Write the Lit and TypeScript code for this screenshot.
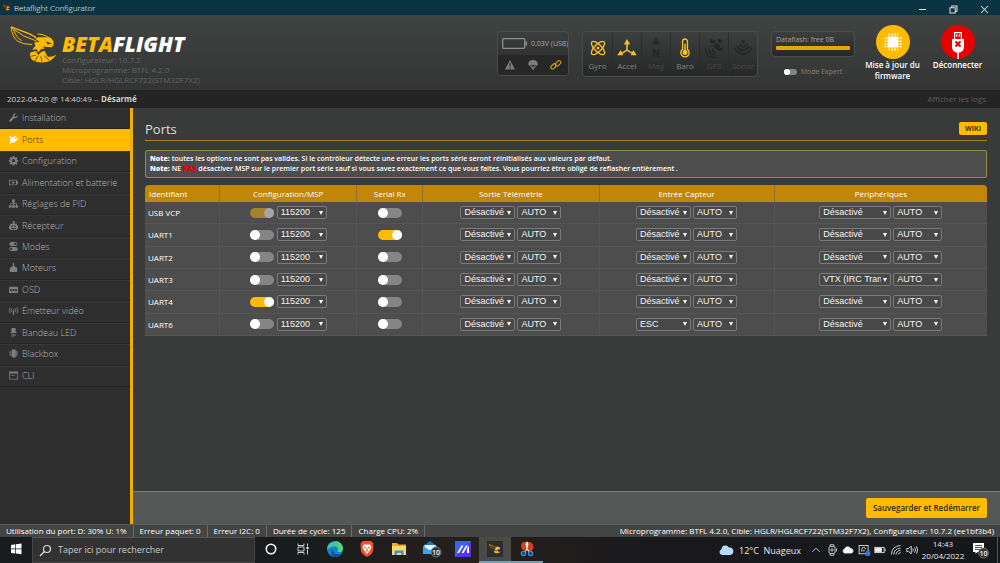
import { LitElement, html, css, svg } from "lit";
import { customElement, property, state } from "lit/decorators.js";
import { classMap } from "lit/directives/class-map.js";

const bee = svg`
  <path d="M2 3 L58 24 Q74 31 84 42" fill="none" stroke="currentColor" stroke-width="4"/>
  <path d="M2 3 Q6 34 22 46 Q38 56 66 56 M10 12 Q18 36 34 44 M4 6 L40 30 L80 46" fill="none" stroke="currentColor" stroke-width="3"/>
  <path d="M84 34 L104 34 L118 34 Q130 40 131 52 Q131 60 124 64 L98 62 L104 68 L92 70 L84 80 L80 70 L66 72 L76 60 L72 50 L88 48 L78 40 Z" fill="currentColor"/>
  <path d="M82 24 Q112 26 128 46" fill="none" stroke="currentColor" stroke-width="3"/>
  <path d="M60 80 L78 76 L84 88 L94 78 L104 76 L112 92 Q126 96 139 86 Q128 106 104 110 Q74 112 63 100 Q58 90 60 80 Z" fill="currentColor"/>
  <path d="M62 92 L78 88 M74 106 L84 90 M96 108 L92 92 M118 104 L102 90" stroke="#3a3d3c" stroke-width="2.500"/>
  <path d="M108 46 L126 54 L112 56 Z" fill="#3a3d3c"/>`;

const icons: Record<string, unknown> = {
  wrench: svg`<path d="M15.500 3.500 12.500 6.500 9.800 6.200 9.500 3.500 12.500.600A4.500 4.500 0 0 0 7 6.300L.800 12.500A1.900 1.900 0 0 0 3.500 15.200L9.700 9A4.500 4.500 0 0 0 15.500 3.500Z"/>`,
  plug: svg`<path d="M1 1 5 4.500 7 2.500 13.500 9 11 12Q8 15 4.500 13L1.800 15.800 0 14 2.500 11.500Q0 8 3 5.500L0 2.500Z"/><path d="m8 4.500 4-4 1.500 1.500-4 4Zm3.500 3.500 4-3.500 1 1.500-4 4Z"/>`,
  gear: svg`<path fill-rule="evenodd" d="M6.700 0h2.600l.4 2.200 1.500.7 1.900-1.300 1.800 1.800-1.300 1.900.7 1.500 2.200.4v2.600l-2.200.4-.7 1.500 1.300 1.900-1.800 1.800-1.900-1.300-1.500.7-.4 2.200H6.700l-.4-2.200-1.500-.7-1.900 1.300-1.800-1.800 1.300-1.900-.7-1.500L-.5 9.800V7.200l2.200-.4.700-1.500L1.100 3.400l1.800-1.800 1.900 1.300 1.500-.7ZM8 5.200a3 3 0 1 0 0 6 3 3 0 0 0 0-6Z"/>`,
  battery: svg`<path fill-rule="evenodd" d="M0 3h14v3h2v4h-2v3H0Zm1.500 1.500v7h11v-7Z"/><path d="M8 5 4 8.500h2.500V11L11 7.500H8Z"/>`,
  tree: svg`<path d="M5.500 1h5v5H9v1.500h5V11h2v4.500h-4.500V11h1V9H9v2h1.500v4.500h-5V11H7V9H3.500v2h1v4.500H0V11h2V7.500h5V6H5.500Z"/>`,
  robot: svg`<path fill-rule="evenodd" d="M7 0h3v5h4v3h2v6h-2v2H2v-2H0V8h2V5h5ZM4.500 8v2.500H7V8ZM9.500 8v2.500H12V8ZM4 12.500V14h8v-1.500Z"/>`,
  modes: svg`<path fill-rule="evenodd" d="M4 0h7a3.500 3.500 0 0 1 0 7H4a3.500 3.500 0 0 1 0-7Zm7 1.500a2 2 0 1 0 0 4 2 2 0 0 0 0-4ZM4 9h8a3.500 3.500 0 0 1 0 7H4a3.500 3.500 0 0 1 0-7Zm0 1.500a2 2 0 1 0 0 4 2 2 0 0 0 0-4Z"/>`,
  motor: svg`<path d="M7 0h2v5h1.500v2H13l1.500 3v6h-13v-6L3 7h2.500V5H7Z"/>`,
  osd: svg`<path fill-rule="evenodd" d="M1 3h14l1 2v9H0V5Zm1 4v4h3V7Zm4.500 0v4h3V7ZM11 7v4h3V7Z"/>`,
  antenna: svg`<path d="M7 6h2v10H7Z"/><path d="M5 4.500Q3 7.500 5 11M2 2.500Q-1 8 2 13M11 4.500Q13 7.500 11 11M14 2.500Q17 8 14 13" fill="none" stroke="currentColor" stroke-width="1.600"/>`,
  led: svg`<path d="M4.500 0h7l.5 7h1.500v2H2.500V7H4ZM4.500 10H6v6H4.500ZM10 10h1.500v4H10ZM7.300 10h1.400v5H7.300Z"/>`,
  blackbox: svg`<path d="M5 1h7v14H5ZM2.500 3H4v10H2.500ZM13 3h1.500v10H13ZM0 5h1.200v2H0Zm0 4h1.200v2H0Zm15.200-4H16v6h-.8Z"/>`,
  cli: svg`<path fill-rule="evenodd" d="M0 1h16v14H0Zm1.300 3.500v9.200h13.400V4.500Z"/><path d="M3 6.500h2v1.500H3ZM6 7h4v1.300H6Z"/>`,
};

const icon = (name: string) =>
  html`<svg class="icon" viewBox="0 0 16 16" fill="currentColor" aria-hidden="true">${icons[name]}</svg>`;

const sensorIcons: Record<string, unknown> = {
  Gyro: svg`<g fill="none" stroke="currentColor" stroke-width="2"><ellipse cx="12" cy="12" rx="12.500" ry="5" transform="rotate(45 12 12)"/><ellipse cx="12" cy="12" rx="12.500" ry="5" transform="rotate(-45 12 12)"/></g><circle cx="12" cy="12" r="2.200" fill="currentColor"/>`,
  Accel: svg`<path d="M12 5v10L3 20.500M12 15l9 5.500" fill="none" stroke="currentColor" stroke-width="2.200"/><path d="M12-1l4.500 8h-9ZM-2 22.500 3 15l3.500 7.500ZM26 22.500 21 15l-3.500 7.500Z" fill="currentColor"/>`,
  Mag: svg`<path d="M12-3l6 10H6Z" fill="currentColor"/><path d="M8.500 25V13M8.500 13l7 12M15.500 25V13" fill="none" stroke="currentColor" stroke-width="2.500"/>`,
  Baro: svg`<path d="M8.500 14V2.500a3.500 3.500 0 0 1 7 0V14a6 6 0 1 1-7 0Z" fill="none" stroke="currentColor" stroke-width="2"/><path d="M11 6h2v9a3.700 3.700 0 1 1-2 0Z" fill="currentColor"/>`,
  GPS: svg`<g fill="currentColor"><path d="m11 9 5-5 5 5-5 5ZM8-1l7 3-4 4-6-3ZM18 9l7 4-3 4-7-4ZM17 1l3-3 4 4-3 3Z"/></g><path d="M10 14a4 4 0 0 0 4 4M5 13a8 8 0 0 0 8 9M0 12q0 14 14 14" fill="none" stroke="currentColor" stroke-width="2"/>`,
  Sonar: svg`<g fill="none" stroke="currentColor" stroke-width="2.400"><path d="M-1 12Q12 30 25 12M3 9Q12 22 21 9M7 7Q12 14 17 7"/></g><circle cx="12" cy="3" r="2.500" fill="currentColor"/>`,
};

const trayIcons: Record<string, unknown> = {
  chevron: svg`<path d="M3 10.500 8 5.500l5 5"/>`,
  watch: svg`<rect x="4" y="3.500" width="8" height="9" rx="1.500"/><path d="M5.500 3V1h5v2M5.500 13v2h5v-2M14 6v4"/><circle cx="8" cy="8" r="1.500"/>`,
  onedrive: svg`<path d="M3 12a3 3 0 0 1 .5-5.500 4.500 4.500 0 0 1 8-.5A3.200 3.200 0 0 1 13 12Z" fill="#fff"/>`,
  sync: svg`<rect x="1.500" y="2" width="12" height="11"/><path d="M5 10V7a2.500 2.500 0 0 1 5 0M6 9h3"/><circle cx="13" cy="12.500" r="3.500" fill="#2f7bd8" stroke="none"/>`,
  power: svg`<rect x="1" y="4.500" width="12.500" height="7"/><path d="M2 5.500h8v5H2Z" fill="#fff"/><path d="M15 6.500v3"/>`,
  wifi: svg`<path d="M2 14Q2 3 14 2M5 14q0-7.500 9-8.500M8 14q0-4.500 6-5.500M11 14q0-2 3-2.500"/>`,
  volume: svg`<path d="M1 6h2.500L7 3v10L3.500 10H1ZM9 6q1.500 2 0 4M11.500 4.500q2.500 3.500 0 7M14 3q3 5 0 10"/>`,
};

interface PortRow {
  id: string;
  msp: boolean;
  locked?: boolean;
  rx: boolean;
  sensor: string;
  peripheral: string;
}

@customElement("bf-toggle")
class BfToggle extends LitElement {
  @property({ type: Boolean }) checked = false;
  @property({ type: Boolean }) disabled = false;
  @property() label = "";
  @property({ type: Boolean, reflect: true }) small = false;
  static styles = css`
    :host { display: inline-flex; --w: 24px; --h: 10px; }
    :host([small]) { --w: 13px; --h: 6px; }
    .switch { appearance: none; display: flex; align-items: center; margin: 0; width: var(--w); height: var(--h); border-radius: 6px; background: #858585; }
    .switch::before { content: ""; width: var(--h); height: var(--h); border-radius: 50%; background: #fff; }
    .switch:checked { background: #ffbb00; justify-content: flex-end; }
    .switch:disabled { background: #a5832b; }
    .switch:disabled::before { background: #a6a6a6; }
  `;
  render() {
    return html`<input class="switch" type="checkbox" role="switch" aria-label=${this.label} .checked=${this.checked} ?disabled=${this.disabled} />`;
  }
}

@customElement("bf-select")
class BfSelect extends LitElement {
  @property() value = "";
  @property() label = "";
  @property({ attribute: false }) options: string[] = [];
  static styles = css`
    :host { display: inline-grid; align-items: center; }
    .box, .arrow { grid-area: 1 / 1; }
    .box { appearance: none; box-sizing: border-box; width: 100%; height: 13px; margin: 0; padding: 0 9px 0 3px; border: 1px solid #7a7a7a; border-radius: 2px; background: #484848; color: #f4f4f4; font: 9px/11px "Liberation Sans", Arial, sans-serif; overflow: hidden; }
    .arrow { justify-self: end; width: 4px; height: 4px; margin-right: 4px; fill: #fff; pointer-events: none; z-index: 1; }
  `;
  render() {
    const all = this.options.includes(this.value) ? this.options : [this.value, ...this.options];
    return html`<select class="box" aria-label=${this.label}>
        ${all.map((o) => html`<option ?selected=${o === this.value}>${o}</option>`)}
      </select>
      <svg class="arrow" viewBox="0 0 4 4" aria-hidden="true"><path d="M0 0h4L2 4Z" /></svg>`;
  }
}

@customElement("app-root")
class AppRoot extends LitElement {
  @state() private active = "Ports";

  private tabs: [string, string][] = [
    ["Installation", "wrench"],
    ["Ports", "plug"],
    ["Configuration", "gear"],
    ["Alimentation et batterie", "battery"],
    ["Réglages de PID", "tree"],
    ["Récepteur", "robot"],
    ["Modes", "modes"],
    ["Moteurs", "motor"],
    ["OSD", "osd"],
    ["Émetteur vidéo", "antenna"],
    ["Bandeau LED", "led"],
    ["Blackbox", "blackbox"],
    ["CLI", "cli"],
  ];

  private sensors: [string, boolean][] = [
    ["Gyro", true], ["Accel", true], ["Mag", false], ["Baro", true], ["GPS", false], ["Sonar", false],
  ];

  private rows: PortRow[] = [
    { id: "USB VCP", msp: true, locked: true, rx: false, sensor: "Désactivé", peripheral: "Désactivé" },
    { id: "UART1", msp: false, rx: true, sensor: "Désactivé", peripheral: "Désactivé" },
    { id: "UART2", msp: false, rx: false, sensor: "Désactivé", peripheral: "Désactivé" },
    { id: "UART3", msp: false, rx: false, sensor: "Désactivé", peripheral: "VTX (IRC Tramp)" },
    { id: "UART4", msp: true, rx: false, sensor: "Désactivé", peripheral: "Désactivé" },
    { id: "UART6", msp: false, rx: false, sensor: "ESC", peripheral: "Désactivé" },
  ];

  static styles = css`
    :host { display: flex; flex-direction: column; height: 100vh; overflow: hidden; font: 8px/11px "Open Sans", "Noto Sans", sans-serif; color: #fff; background: #393b3a; }
    * { box-sizing: border-box; }
    button { font: inherit; color: inherit; border: 0; padding: 0; margin: 0; background: none; cursor: pointer; }
    a { color: inherit; text-decoration: none; }
    svg { display: block; overflow: visible; flex: none; }
    .stroke { fill: none; stroke: #ddd; stroke-width: 1.2; }

    .titlebar { display: flex; align-items: center; flex: none; height: 15px; background: #0c3341; color: #fff; }
    .app-name { font-weight: 300; }
    .app-icon { width: 9px; height: 9px; margin: 0 3px 0 2px; padding: 1px; background: #2b2b2b; color: #ffbb00; }
    .window-buttons { display: flex; margin-left: auto; padding-top: 3px; }
    .window-buttons button { width: 31px; display: grid; place-items: center; }
    .window-buttons svg { width: 7px; height: 7px; }

    .header { display: flex; align-items: flex-start; flex: none; height: 75px; padding: 10px 10px 0; background: linear-gradient(#404342, #323534); }
    .bee { width: 47px; height: 37px; color: #ffbb00; margin-top: 1px; }
    .brand { margin: 9px auto 0 5px; color: #626463; line-height: 10px; }
    .wordmark { margin: 0; font: italic 800 21px/21px "Open Sans", sans-serif; color: #ffbb00; }
    .wordmark span { color: #fff; }
    .panel { border: 1px solid #4a4c4b; border-radius: 4px; background: linear-gradient(#3d3f3e, #272727); margin-top: 6px; }
    .power { width: 72px; height: 45px; overflow: hidden; margin-right: 13px; font-size: 7px; color: #a5a5a5; }
    .volts { display: flex; align-items: center; gap: 4px; height: 23px; padding-left: 4px; white-space: nowrap; }
    .cell { width: 25px; height: 11px; }
    .flags { display: flex; justify-content: space-around; align-items: center; height: 20px; background: #272727; color: #7c7c7c; }
    .flags svg { width: 10px; height: 10px; }
    .flags .link { color: #c99a1c; }
    .sensors { display: grid; grid-template-columns: repeat(6, 29px); height: 46px; margin: 6px 13px 0 0; padding: 0; list-style: none; overflow: hidden; }
    .sensor { display: flex; flex-direction: column; align-items: center; gap: 3px; padding-top: 7px; border-left: 1px solid #2b2c2c; color: #484949; }
    .sensor:first-child { border-left: 0; }
    .sensor svg { width: 18px; height: 18px; color: #252626; }
    .sensor.on svg { color: #f7c02c; }
    .sensor.on { color: #858585; }
    .storage { width: 84px; margin-right: 5px; }
    .flash { height: 26px; padding: 2px 4px 0; font-size: 7px; color: #a6a6a6; }
    .flash label { display: block; }
    .flash meter { appearance: none; display: block; width: 100%; height: 4px; margin-top: 1px; border: 0; }
    .flash meter::-webkit-meter-bar { display: block; height: 4px; border: 0; border-radius: 1px; background: #e5a800; }
    .flash meter::-webkit-meter-optimum-value { background: #e5a800; }
    .expert { display: flex; align-items: center; justify-content: center; gap: 4px; margin-top: 9px; font-size: 7px; color: #828282; }
    .action { display: flex; flex-direction: column; align-items: center; width: 65px; line-height: 11px; font-weight: 600; }
    .disc { width: 34px; height: 34px; border-radius: 50%; background: #ffbb00; overflow: hidden; }
    .disc.red { background: #e60000; }

    .logbar { display: flex; justify-content: space-between; align-items: center; flex: none; height: 18px; padding: 0 14px 2px 7px; background: #242424; color: #d0d0d0; }
    .logbar a { color: #5d5d5d; }

    .middle { display: flex; flex: 1; min-height: 0; }
    .sidebar { flex: none; width: 133px; border-right: 3px solid #f0ae00; background: #2e2e2e; }
    .tabs { display: grid; grid-template-rows: repeat(13, 1fr); height: 279px; margin: 0; padding: 0; list-style: none; }
    .tab { display: flex; align-items: center; gap: 4px; height: 100%; padding: 0 0 2px 9px; border-top: 1px solid #383838; border-bottom: 1px solid #242424; color: #b4b4b4; font-size: 9px; font-weight: 300; white-space: nowrap; }
    .tab .icon { width: 9px; height: 9px; color: #7f7f7f; }
    .tab.active { background: #ffbb00; border-color: #ffbb00; color: #3a2c00; }
    .tab.active .icon { color: #fff; }

    .page { display: flex; flex-direction: column; flex: 1; min-width: 0; }
    .content { flex: 1; min-height: 0; padding: 11px 13px 0 12px; }
    .heading { display: flex; align-items: center; justify-content: space-between; height: 22px; padding-bottom: 2px; border-bottom: 1px solid #b0800c; }
    .heading h1 { margin: 0; font-size: 13px; line-height: 18px; font-weight: 400; color: #dedede; }
    .wiki { padding: 0 6px; border-radius: 2px; background: #ffbb00; color: #4a3600; font-size: 7px; line-height: 13px; font-weight: 700; }
    .note { margin: 9px 0 7px; padding: 3px 4px; border: 1px solid #9a8a4a; border-radius: 2px; background: #4d4d4d; font-size: 7px; line-height: 10px; font-weight: 600; }
    .note p { margin: 0; }
    .note .alert { color: #e60000; }

    .ports { width: 100%; height: 151px; table-layout: fixed; border-collapse: separate; border-spacing: 0; border-radius: 4px 4px 0 0; overflow: hidden; background: #4d4d4d; }
    .ports th, .ports td { padding: 0; text-align: center; border-right: 1px solid #555; font-weight: 400; }
    .ports tr > :last-child { border-right: 0; }
    .ports thead th { height: 17px; background: #bf8609; border-color: #8d6f2a; }
    .ports tbody th, .ports td { border-bottom: 1px solid #555; }
    .ports tbody th { text-align: left; padding-left: 3px; }
    .ports thead th:first-child { text-align: left; padding-left: 4px; }
    .c-id { width: 75px; }
    .c-msp { width: 137px; }
    .c-rx { width: 66px; }
    .c-tel { width: 176px; }
    .c-sen { width: 175px; }
    .c-per { width: 212px; }
    .controls { display: flex; align-items: center; justify-content: center; gap: 2px; }
    .baud { width: 50px; margin-left: 1px; }
    .func { width: 55px; }
    .rate { width: 44px; }
    .func.wide { width: 72px; }
    .rate.wide { width: 49px; }

    .savebar { display: flex; align-items: center; justify-content: flex-end; flex: none; height: 33px; padding: 0 13px; border-top: 1px solid #787a79; background: #565857; }
    .save { padding: 0 7px; border-radius: 2px; background: #ffbb00; color: #332600; line-height: 20px; font-weight: 600; }

    .status { display: flex; flex: none; height: 13px; background: #434545; border-top: 1px solid #5a5c5b; line-height: 12px; white-space: nowrap; }
    .status span { padding: 0 6px; border-right: 1px solid #6a6c6b; }
    .status .build { margin-left: auto; border: 0; }

    .taskbar { display: flex; align-items: stretch; flex: none; height: 26px; background: linear-gradient(90deg, #191b1d 28%, #25201c 48%, #19191d 66%, #15171b); color: #e8e8e8; }
    .task { display: grid; place-items: center; width: 32px; border-bottom: 2px solid transparent; }
    .task svg { width: 16px; height: 16px; }
    .task.open { border-color: #5ba9c4; }
    .task.current { background: #4a4b46; }
    .search { display: flex; align-items: center; gap: 7px; width: 223px; padding: 0 7px; border: 1px solid #464646; border-top-color: #555; background: #323232; }
    .search svg { width: 11px; height: 11px; }
    .search input { flex: 1; min-width: 0; padding: 0; border: 0; outline: 0; background: none; color: #fff; font: 9px/14px "Open Sans", sans-serif; }
    .search input::placeholder { color: #c8c8c8; opacity: 1; }
    .tray { display: flex; align-items: center; margin-left: auto; }
    .weather { display: flex; align-items: center; gap: 6px; margin-right: 7px; font-size: 9px; }
    .weather svg { width: 14px; height: 10px; }
    .tray-icon { display: grid; place-items: center; width: 16px; }
    .tray-icon svg { width: 12px; height: 12px; }
    .clock { width: 46px; text-align: center; line-height: 12px; }
    .notices { width: 22px; margin: 0 6px 0 3px; padding-left: 4px; }
    .notices svg { width: 16px; height: 16px; }
    .peek { align-self: stretch; width: 3px; border-left: 1px solid #555; }
    .badge { font: 600 7px "Open Sans", sans-serif; fill: #fff; text-anchor: middle; }
  `;

  private pair(label: string, value: string, options: string[], wide = false) {
    const c = classMap({ func: true, wide });
    const r = classMap({ rate: true, wide });
    return html`<div class="controls">
      <bf-select class=${c} label=${label} .value=${value} .options=${options}></bf-select>
      <bf-select class=${r} label="${label} – débit" .value=${"AUTO"} .options=${["AUTO", "9600", "19200", "38400", "57600", "115200"]}></bf-select>
    </div>`;
  }

  private task(label: string, art: unknown, cls = "") {
    return html`<button class="task ${cls}" aria-label=${label}><svg viewBox="0 0 16 16">${art}</svg></button>`;
  }

  render() {
    return html`
      <div class="titlebar">
        <svg class="app-icon" viewBox="0 0 140 112" aria-hidden="true">${bee}</svg>
        <span class="app-name">Betaflight Configurator</span>
        <div class="window-buttons">
          <button aria-label="Réduire"><svg class="stroke" viewBox="0 0 8 8"><path d="M0 4h8" /></svg></button>
          <button aria-label="Restaurer"><svg class="stroke" viewBox="0 0 8 8"><path d="M0 2h6v6H0ZM2 2V0h6v6H6" /></svg></button>
          <button aria-label="Fermer"><svg class="stroke" viewBox="0 0 8 8"><path d="m0 0 8 8M8 0 0 8" /></svg></button>
        </div>
      </div>

      <header class="header">
        <svg class="bee" viewBox="0 0 140 112" aria-hidden="true">${bee}</svg>
        <div class="brand">
          <p class="wordmark">BETA<span>FLIGHT</span></p>
          <div>Configurateur: 10.7.2</div>
          <div>Microprogramme: BTFL 4.2.0</div>
          <div>Cible: HGLR/HGLRCF722(STM32F7X2)</div>
        </div>
        <div class="panel power">
          <div class="volts">
            <svg class="cell" viewBox="0 0 25 11"><rect x=".7" y=".7" width="22" height="9.600" rx="1" fill="none" stroke="#8f8f8f" stroke-width="1.300" /><path d="M23.500 3.500H25v4h-1.500Z" fill="#8f8f8f" /></svg>
            <span>0.03V (USB)</span>
          </div>
          <div class="flags">
            <svg viewBox="0 0 16 16"><path fill="currentColor" fill-rule="evenodd" d="M8 0 16 15H0ZM7 5l.3 5.500h1.400L9 5Zm0 6.500v2h2v-2Z" /></svg>
            <svg viewBox="0 0 16 16"><path fill="currentColor" d="M0 7Q1 0 8 0t8 7L12.500 8.500 10 7.500 8 8.500 6 7.500 3.500 8.500Z" /><path d="M1 7.500 7 13M15 7.500 9 13M5 8l2.500 5M11 8l-2.500 5" stroke="currentColor" stroke-width="1.400" /><path fill="currentColor" d="M6 12h4v3H6Z" /></svg>
            <svg class="link" viewBox="0 0 16 16"><g fill="none" stroke="currentColor" stroke-width="1.900"><rect x="-1" y="7.500" width="10" height="5.600" rx="2.800" transform="rotate(-45 4 10.500)" /><rect x="6.500" y="2.500" width="10" height="5.600" rx="2.800" transform="rotate(-45 11.500 5.500)" /></g></svg>
          </div>
        </div>
        <ul class="panel sensors">
          ${this.sensors.map(
            ([name, on]) => html`<li class=${classMap({ sensor: true, on })}>
              <svg viewBox="-1 -1 26 26" aria-hidden="true">${sensorIcons[name]}</svg><span>${name}</span>
            </li>`,
          )}
        </ul>
        <div class="storage">
          <div class="panel flash">
            <label for="flash">Dataflash: free 0B</label>
            <meter id="flash" min="0" max="1" value="1"></meter>
          </div>
          <div class="expert"><bf-toggle small label="Mode Expert"></bf-toggle><span>Mode Expert</span></div>
        </div>
        <button class="action">
          <svg class="disc" viewBox="0 0 34 34"><path fill="#fff" d="M11.500 11.500h11v11h-11ZM12.500 8.500h1.500v2h-1.500Zm3 0H17v2h-1.500Zm3 0H20v2h-1.500Zm2.500 0h1.200v2H21ZM12.500 23.500h1.500v2h-1.500Zm3 0H17v2h-1.500Zm3 0H20v2h-1.500Zm2.500 0h1.200v2H21ZM8.500 12.500h2V14h-2Zm0 3h2V17h-2Zm0 3h2V20h-2Zm0 2.500h2v1.200h-2ZM23.500 12.500h2V14h-2Zm0 3h2V17h-2Zm0 3h2V20h-2Zm0 2.500h2v1.200h-2Z" /></svg>
          <span>Mise à jour du<br />firmware</span>
        </button>
        <button class="action">
          <svg class="disc red" viewBox="0 0 34 34"><path fill="#fff" d="M16.300 26h1.600v8h-1.600Z" /><path fill="#fff" fill-rule="evenodd" d="M13 7h8v7h2v8q0 4-4 5.500h-4q-4-1.500-4-5.500v-8h2Zm1.200 1.200V14h5.600V8.200ZM15 9.500h1.500v2H15Zm2.700 0h1.500v2h-1.500Z" /><path d="m14.500 16.500 5 5M19.500 16.500l-5 5" stroke="#e60000" stroke-width="2" /></svg>
          <span>Déconnecter</span>
        </button>
      </header>

      <div class="logbar">
        <span>2022-04-20 @ 14:40:49 -- <b>Désarmé</b></span>
        <a href="#logs">Afficher les logs</a>
      </div>

      <div class="middle">
        <nav class="sidebar">
          <ul class="tabs">
            ${this.tabs.map(
              ([name, glyph]) => html`<li>
                <a href="#${glyph}" class=${classMap({ tab: true, active: name === this.active })} @click=${() => (this.active = name)}>${icon(glyph)}<span>${name}</span></a>
              </li>`,
            )}
          </ul>
        </nav>
        <main class="page">
          <div class="content">
            <div class="heading"><h1>Ports</h1><button class="wiki">WIKI</button></div>
            <div class="note">
              <p><b>Note:</b> toutes les options ne sont pas valides. Si le contrôleur détecte une erreur les ports série seront réinitialisés aux valeurs par défaut.</p>
              <p><b>Note:</b> NE <b class="alert">PAS</b> désactiver MSP sur le premier port série sauf si vous savez exactement ce que vous faites. Vous pourriez être obligé de reflasher entièrement .</p>
            </div>
            <table class="ports">
              <colgroup><col class="c-id" /><col class="c-msp" /><col class="c-rx" /><col class="c-tel" /><col class="c-sen" /><col class="c-per" /></colgroup>
              <thead>
                <tr><th scope="col">Identifiant</th><th scope="col">Configuration/MSP</th><th scope="col">Serial Rx</th><th scope="col">Sortie Télémétrie</th><th scope="col">Entrée Capteur</th><th scope="col">Périphériques</th></tr>
              </thead>
              <tbody>
                ${this.rows.map(
                  (r) => html`<tr>
                    <th scope="row">${r.id}</th>
                    <td><div class="controls">
                      <bf-toggle label="${r.id} MSP" ?checked=${r.msp} ?disabled=${!!r.locked}></bf-toggle>
                      <bf-select class="baud" label="${r.id} débit MSP" .value=${"115200"} .options=${["9600", "57600", "115200", "250000"]}></bf-select>
                    </div></td>
                    <td><div class="controls"><bf-toggle label="${r.id} Serial Rx" ?checked=${r.rx}></bf-toggle></div></td>
                    <td>${this.pair(`${r.id} télémétrie`, "Désactivé", ["Désactivé", "FrSky", "SmartPort"])}</td>
                    <td>${this.pair(`${r.id} capteur`, r.sensor, ["Désactivé", "ESC", "GPS"])}</td>
                    <td>${this.pair(`${r.id} périphérique`, r.peripheral, ["Désactivé", "VTX (IRC Tramp)"], true)}</td>
                  </tr>`,
                )}
              </tbody>
            </table>
          </div>
          <div class="savebar"><button class="save">Sauvegarder et Redémarrer</button></div>
        </main>
      </div>

      <footer class="status">
        <span>Utilisation du port: D: 30% U: 1%</span><span>Erreur paquet: 0</span><span>Erreur I2C: 0</span><span>Durée de cycle: 125</span><span>Charge CPU: 2%</span>
        <span class="build">Microprogramme: BTFL 4.2.0, Cible: HGLR/HGLRCF722(STM32F7X2), Configurateur: 10.7.2 (ee1bf3b4)</span>
      </footer>

      <div class="taskbar">
        ${this.task("Démarrer", svg`<path fill="#fff" d="M3 4l4.300-.7v4.200H3ZM8 3.200 13.500 2.500v5H8ZM3 8.300h4.300v4.200L3 11.900ZM8 8.300h5.500v5L8 12.600Z"/>`)}
        <label class="search">
          <svg class="stroke" viewBox="0 0 11 11" aria-hidden="true"><circle cx="7" cy="4" r="3.500" /><path d="M4.500 6.500 0 11" /></svg>
          <input type="text" placeholder="Taper ici pour rechercher" aria-label="Rechercher" />
        </label>
        ${this.task("Cortana", svg`<circle cx="8" cy="8" r="4.700" fill="none" stroke="#fff" stroke-width="1.600"/>`)}
        ${this.task("Affichage des tâches", svg`<path d="M3 2.500v2h6v-2M3 13.500v-2h6v2M3 6h6v4H3ZM12.500 2.500v3M12.500 8.500v5" fill="none" stroke="#ccc"/><path d="M11.500 6h2v2h-2Z" fill="#fff"/>`)}
        ${this.task("Edge", svg`<circle cx="8" cy="8" r="8" fill="#1583cc"/><path d="M.3 6.500A8 8 0 0 1 16 7.500c0 3-3 4-5.500 3 1.500-2 .5-5-3-5C4 5.500 1.500 7 .3 9Z" fill="#3cc8a8"/><path d="M9 .1A8 8 0 0 1 16 7.500c0 3-3 4-5.500 3 1.500-2 2-6-1.500-10.400Z" fill="#5bd668"/><path d="M6 8q-1 6 8 5.500-3 3-7 2.300Q2 13 6 8Z" fill="#0b4f9c"/>`)}
        ${this.task("Brave", svg`<path d="M4 0h8l2.500 2.500L14 10q-.5 3-6 6-5.500-3-6-6L1.500 2.500Z" fill="#f4502a"/><path d="M5 3.500h6L12.500 6l-2 4L8 13 5.500 10l-2-4Z" fill="#fff"/><path d="m5 6 2 .8M11 6 9 6.800M8 7v2.500M6.500 10.500 8 9.500l1.500 1" stroke="#f4502a" fill="none"/>`)}
        ${this.task("Explorateur", svg`<path d="M1 2h5l1.500 1.500H15V14H1Z" fill="#e9a92a"/><path d="M1 5h14v9H1Z" fill="#ffd766"/><path d="M3.500 14V9.500h9V14h-2.500v-2H6v2Z" fill="#3a94dc"/>`)}
        ${this.task("Courrier", svg`<path d="M0 5 7 0l7 5v8H0Z" fill="#1478c8"/><path d="M1.500 4h11v5h-11Z" fill="#eaf5fc"/><path d="m0 5 7 4.500L14 5v8H0Z" fill="#30a8ec"/><circle cx="13" cy="11" r="5" fill="#333" stroke="#999" stroke-width=".7"/><text class="badge" x="13" y="13.500">10</text>`)}
        ${this.task("Armoury", svg`<path d="M0 0h16v16H0Z" fill="#3b62f0"/><path d="M0 16 16 0v16Z" fill="#5038e8"/><path d="M2 12 6.500 4.500h2L4 12ZM6.500 12 11 4.500h2L8.500 12ZM12 8l2-3.500V12h-2Z" fill="#fff"/>`)}
        ${this.task("Betaflight", svg`<path d="M0 0h16v16H0Z" fill="#2d2d2d"/><g transform="translate(2 3) scale(.085)" color="#ffcc22">${bee}</g>`, "open current")}
        ${this.task("Capture d'écran", svg`<path d="M4 9A5 5 0 0 1 4 1h7a5 5 0 0 1 1 9Z" fill="#d9401f"/><path d="M6.500 3 8 10l1.500-7L8 0Z" fill="#e8eef2"/><path d="M8 8 6 11M8 8l2.500 3" stroke="#cfd8dd" stroke-width="1.300"/><circle cx="4.500" cy="12.500" r="2" fill="none" stroke="#2f93dc" stroke-width="1.500"/><circle cx="11.500" cy="12.500" r="2" fill="none" stroke="#2f93dc" stroke-width="1.500"/>`, "open")}
        <div class="tray">
          <div class="weather">
            <svg viewBox="0 0 14 10" aria-hidden="true"><path d="M3 10a3 3 0 0 1-.5-5.800A4 4 0 0 1 10 2.500 3.700 3.700 0 0 1 11 10Z" fill="#b5dcf8" /></svg>
            <span>12°C&nbsp; Nuageux</span>
          </div>
          ${Object.entries(trayIcons).map(([name, art]) => html`<button class="tray-icon" aria-label=${name}><svg class="stroke" viewBox="0 0 16 16">${art}</svg></button>`)}
          <div class="clock">14:43<br />20/04/2022</div>
          <button class="notices" aria-label="Notifications"><svg viewBox="0 0 16 16"><path d="M0 1h11v9H4.500L2.500 12v-2H0Z" fill="#fff" /><path d="M2 3.500h7M2 5.500h7M2 7.500h5" stroke="#222" stroke-width=".8" /><circle cx="10.500" cy="11" r="5" fill="#333" stroke="#888" stroke-width=".7" /><text class="badge" x="10.500" y="13.500">10</text></svg></button>
          <div class="peek"></div>
        </div>
      </div>
    `;
  }
}
